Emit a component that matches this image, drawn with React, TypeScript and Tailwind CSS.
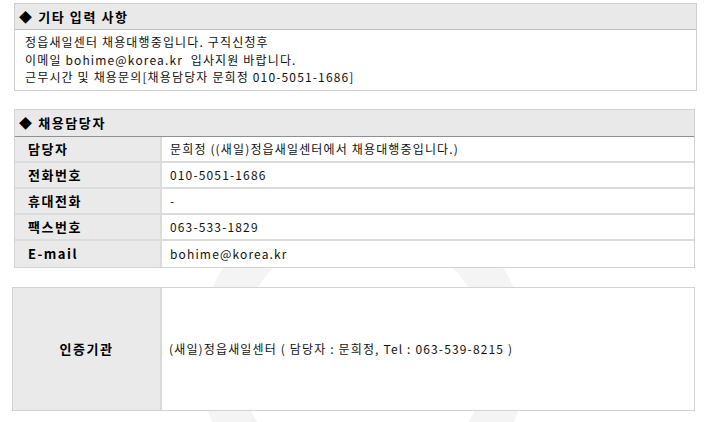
const rows = [
  { label: "담당자", value: "문희정 ((새일)정읍새일센터에서 채용대행중입니다.)" },
  { label: "전화번호", value: "010-5051-1686" },
  { label: "휴대전화", value: "-" },
  { label: "팩스번호", value: "063-533-1829" },
  { label: "E-mail", value: "bohime@korea.kr" },
];

const font = "font-['Noto_Sans_CJK_KR','Liberation_Sans',sans-serif]";

const App = () => {
  return (
    <div className={`relative w-[712px] h-[422px] overflow-hidden bg-white text-[12px] tracking-[1.15px] text-[#111] ${font}`}>
      {/* faint watermark ring */}
      <svg className="absolute left-[198px] top-[190px]" width="330" height="330" viewBox="0 0 330 330">
        <circle cx="165" cy="165" r="145" fill="none" stroke="#f4f4f4" strokeWidth="40" />
      </svg>

      <div className="relative flex flex-col pt-[3px]">
        {/* 기타 입력 사항 */}
        <div className="ml-[14px] w-[683px] border border-[#cfcfcf] bg-white">
          <div className="h-[26px] flex items-center pl-[4px] bg-[#e9e9e9] border-b border-[#bdbdbd] font-bold text-[13px] tracking-[1.6px] text-black">
            ◆ 기타 입력 사항
          </div>
          <div className="pl-[10px] pt-[3px] pb-[4px] leading-[17.5px]">
            <div>정읍새일센터 채용대행중입니다. 구직신청후</div>
            <div>이메일 bohime@korea.kr&nbsp; 입사지원 바랍니다.</div>
            <div>근무시간 및 채용문의[채용담당자 문희정 010-5051-1686]</div>
          </div>
        </div>

        {/* 채용담당자 */}
        <div className="mt-[18px] ml-[14px] w-[681px] border border-[#d3d3d3] bg-white">
          <div className="h-[27px] flex items-center pl-[4px] bg-[#e9e9e9] border-b border-[#8f8f8f] font-bold text-[13px] tracking-[1.6px] text-black">
            ◆ 채용담당자
          </div>
          {rows.map((r, i) => (
            <div
              key={r.label}
              className={`flex h-[26px] ${i < rows.length - 1 ? "border-b-2 border-[#dcdcdc]" : ""}`}
            >
              <div className="w-[147px] flex items-center pl-[13px] bg-[#eaeaea] border-r-2 border-[#dcdcdc] font-bold text-[13px] tracking-[1.5px] text-black">
                {r.label}
              </div>
              <div className="flex-1 flex items-center pl-[8px]">{r.value}</div>
            </div>
          ))}
        </div>

        {/* 인증기관 */}
        <div className="mt-[19px] ml-[12px] w-[683px] h-[124px] flex border border-[#d3d3d3] bg-white">
          <div className="w-[149px] flex items-center justify-center bg-[#eaeaea] border-r-2 border-[#d8d8d8] font-bold text-[13px] tracking-[1.5px] text-black">
            인증기관
          </div>
          <div className="flex-1 flex items-center pl-[7px]">
            (새일)정읍새일센터 ( 담당자 : 문희정, Tel : 063-539-8215 )
          </div>
        </div>
      </div>
    </div>
  );
};

export default App;
